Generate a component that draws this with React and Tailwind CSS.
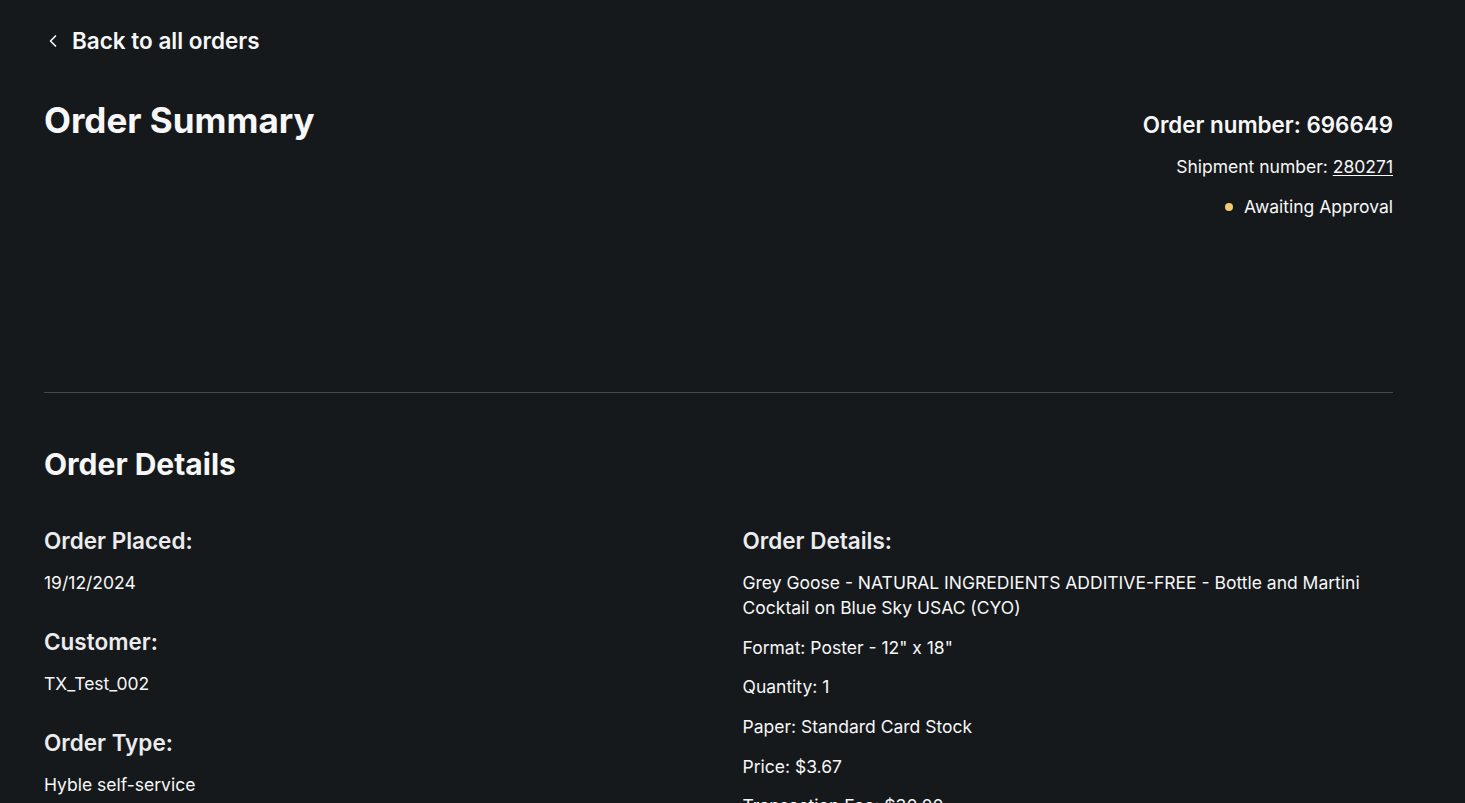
import React from 'react';
import { ChevronLeft } from 'lucide-react';

const leftItems = [
  { label: 'Order Placed:', value: '19/12/2024' },
  { label: 'Customer:', value: 'TX_Test_002' },
  { label: 'Order Type:', value: 'Hyble self-service' },
];

const detailLines = [
  'Grey Goose - NATURAL INGREDIENTS ADDITIVE-FREE - Bottle and Martini Cocktail on Blue Sky USAC (CYO)',
  'Format: Poster - 12" x 18"',
  'Quantity: 1',
  'Paper: Standard Card Stock',
  'Price: $3.67',
  'Transaction Fee: $30.00',
  'Total: $33.67',
];

export default function App() {
  return (
    <div
      className="min-h-screen bg-[#16191b] text-[#f7f7f8] pt-[27px] pl-[44px] pr-[72px]"
      style={{ fontFamily: 'Inter, "Noto Sans", sans-serif' }}
    >
      <a href="#" className="flex items-center gap-[9px] w-fit text-[22.5px] leading-7 font-semibold">
        <ChevronLeft className="w-5 h-5 -ml-[1px]" strokeWidth={2} />
        <span>Back to all orders</span>
      </a>

      <div className="flex justify-between items-start mt-[45px]">
        <h1 className="text-[35px] leading-10 font-bold">Order Summary</h1>
        <div className="flex flex-col items-end mt-[9px]">
          <div className="text-[22.4px] leading-8 font-semibold">Order number: 696649</div>
          <div className="mt-[14px] text-[17.5px] leading-6">
            Shipment number: <a href="#" className="underline underline-offset-2">280271</a>
          </div>
          <div className="mt-4 flex items-center gap-[11px] text-[17.5px] leading-6">
            <span className="w-2 h-2 rounded-full bg-[#f5c971]" />
            <span>Awaiting Approval</span>
          </div>
        </div>
      </div>

      <div className="mt-[173px] border-t border-[#46494c]" />

      <h2 className="mt-[53px] text-[30px] leading-9 font-bold">Order Details</h2>

      <div className="grid grid-cols-2 gap-12 mt-[45px]">
        <div className="flex flex-col gap-[33px]">
          {leftItems.map((it) => (
            <div key={it.label}>
              <div className="text-[22.5px] leading-7 font-semibold text-[#ececee]">{it.label}</div>
              <div className="mt-[15px] text-[17.5px] leading-[25px]">{it.value}</div>
            </div>
          ))}
        </div>
        <div>
          <div className="text-[22.5px] leading-7 font-semibold text-[#ececee]">Order Details:</div>
          <div className="mt-[15px] flex flex-col gap-[14.7px]">
            {detailLines.map((l) => (
              <p key={l} className="text-[17.5px] leading-[25px]">{l}</p>
            ))}
          </div>
        </div>
      </div>
    </div>
  );
}
